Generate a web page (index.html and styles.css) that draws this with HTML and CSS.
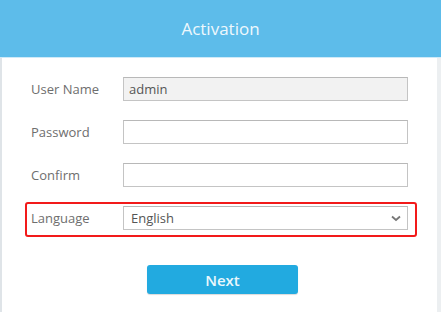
FILE: index.html
```html
<!DOCTYPE html>
<html lang="en">
<head>
    <meta charset="UTF-8">
    <meta name="viewport" content="width=device-width, initial-scale=1.0">
    <title>Activation</title>
    <link rel="stylesheet" href="styles.css">
</head>
<body>
    <div class="panel">
        <header>Activation</header>
        <div class="form">
            <div class="row">
                <label>User Name</label>
                <input type="text" class="field readonly" value="admin" readonly>
            </div>
            <div class="row">
                <label>Password</label>
                <input type="password" class="field">
            </div>
            <div class="row">
                <label>Confirm</label>
                <input type="password" class="field">
            </div>
            <div class="row highlight">
                <label>Language</label>
                <div class="field select">
                    <span>English</span>
                    <svg class="chevron" width="10" height="7" viewBox="0 0 10 7">
                        <path d="M1 1.5 L5 5 L9 1.5" fill="none" stroke="#777" stroke-width="1.8"/>
                    </svg>
                </div>
            </div>
            <div class="button-container">
                <button>Next</button>
            </div>
        </div>
    </div>
</body>
</html>
```

FILE: styles.css
```css
body {
    margin: 0;
    font-family: 'Open Sans', 'Noto Sans', sans-serif;
    background-color: #fff;
    color: #666;
}

.panel {
    width: 441px;
    height: 312px;
    box-sizing: border-box;
    border-left: 2px solid #dfe4e8;
    border-right: 4px solid #eceff1;
}

header {
    height: 57px;
    line-height: 57px;
    background-color: #5dbcea;
    border-bottom: 1px solid #cfeaf8;
    color: #eef8fd;
    text-align: center;
    font-size: 17px;
    margin-left: -2px;
    margin-right: -4px;
}

.form {
    display: flex;
    flex-direction: column;
    gap: 8px;
    padding: 15px 0 0 23px;
}

.row {
    display: flex;
    align-items: center;
    width: 392px;
    box-sizing: border-box;
    padding: 2px 7px 5px 4px;
    border: 2px solid transparent;
    border-radius: 3px;
}

.row.highlight {
    border-color: #f21a1a;
}

.row label {
    width: 92px;
    font-size: 13px;
    color: #6e6e6e;
}

.field {
    width: 285px;
    height: 24px;
    box-sizing: border-box;
    border: 1px solid #c4c4c4;
    border-top-color: #b8b8b8;
    background-color: #fff;
    padding: 0 5px;
    font-family: inherit;
    font-size: 13px;
    color: #555;
    margin: 0;
}

.field.readonly {
    background-color: #f2f2f2;
}

.select {
    display: flex;
    align-items: center;
    justify-content: space-between;
    padding: 0 6px 0 7px;
}

.button-container {
    display: flex;
    justify-content: center;
    margin-top: 20px;
    padding-right: 17px;
}

button {
    width: 151px;
    height: 29px;
    background-color: #22aae0;
    color: #eaf7fc;
    border: none;
    border-radius: 3px;
    box-shadow: 0 1px 1px rgba(0, 0, 0, 0.15);
    font-family: inherit;
    font-size: 15px;
    font-weight: 600;
    cursor: pointer;
}
```
